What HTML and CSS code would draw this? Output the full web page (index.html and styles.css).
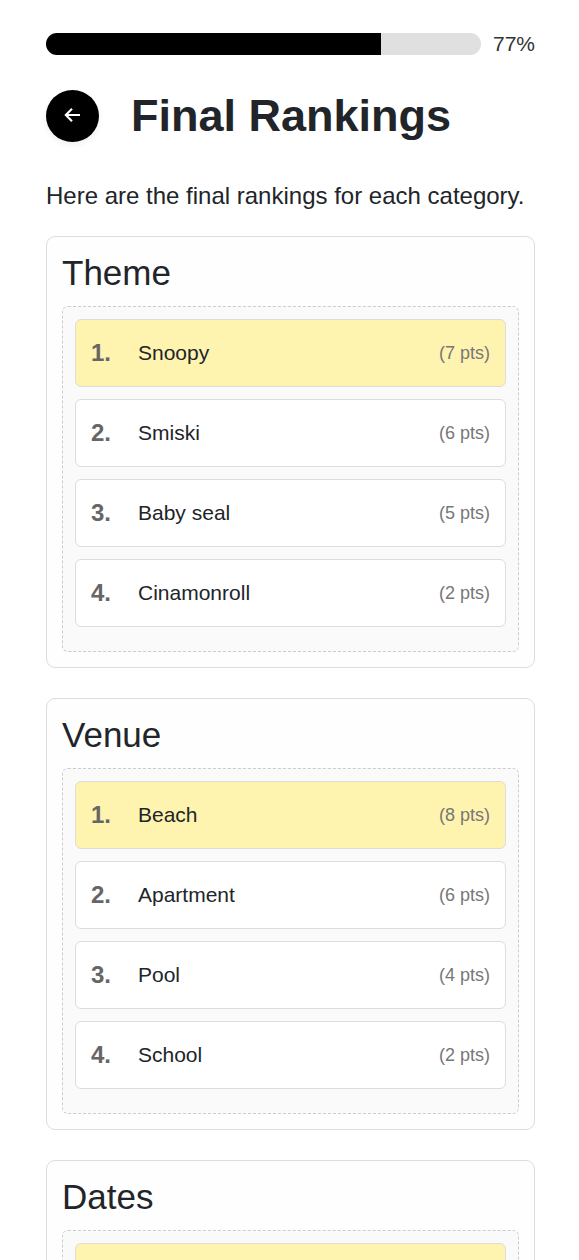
FILE: index.html
```html
<!DOCTYPE html>
<html lang="en">
<head>
<meta charset="utf-8">
<meta name="viewport" content="width=device-width, initial-scale=1">
<title>Final Rankings</title>
<link rel="stylesheet" href="styles.css">
</head>
<body>
<main class="page">
  <div class="progress">
    <div class="progress-track" role="progressbar" aria-label="Progress" aria-valuenow="77" aria-valuemin="0" aria-valuemax="100">
      <div class="progress-fill" style="width: 77%"></div>
    </div>
    <span class="progress-label">77%</span>
  </div>
  <header class="header">
    <button class="back" type="button" aria-label="Back">
      <svg width="19" height="18" viewBox="0 0 19 18" fill="none" stroke="currentColor" stroke-width="2.1" aria-hidden="true"><path d="M17 8H3M9 1.8L2.8 8L9 14.2"/></svg>
    </button>
    <h1 class="title">Final Rankings</h1>
  </header>
  <p class="intro">Here are the final rankings for each category.</p>

  <section class="card">
    <h2 class="card-title">Theme</h2>
    <ol class="ranking">
      <li class="item item-top"><span class="rank">1.</span><span class="name">Snoopy</span><span class="points">(7 pts)</span></li>
      <li class="item"><span class="rank">2.</span><span class="name">Smiski</span><span class="points">(6 pts)</span></li>
      <li class="item"><span class="rank">3.</span><span class="name">Baby seal</span><span class="points">(5 pts)</span></li>
      <li class="item"><span class="rank">4.</span><span class="name">Cinamonroll</span><span class="points">(2 pts)</span></li>
    </ol>
  </section>

  <section class="card">
    <h2 class="card-title">Venue</h2>
    <ol class="ranking">
      <li class="item item-top"><span class="rank">1.</span><span class="name">Beach</span><span class="points">(8 pts)</span></li>
      <li class="item"><span class="rank">2.</span><span class="name">Apartment</span><span class="points">(6 pts)</span></li>
      <li class="item"><span class="rank">3.</span><span class="name">Pool</span><span class="points">(4 pts)</span></li>
      <li class="item"><span class="rank">4.</span><span class="name">School</span><span class="points">(2 pts)</span></li>
    </ol>
  </section>

  <section class="card">
    <h2 class="card-title">Dates</h2>
    <ol class="ranking">
      <li class="item item-top"></li>
    </ol>
  </section>
</main>
</body>
</html>
```

FILE: styles.css
```css
* {
  box-sizing: border-box;
}

html {
  scrollbar-width: none;
}

body {
  margin: 0;
  background: #fff;
  color: #212529;
  font-family: "Liberation Sans", Arial, sans-serif;
  font-size: 24px;
  line-height: 36px;
}

.page {
  padding: 28px 44px 30px 46px;
}

.progress {
  display: flex;
  align-items: center;
  gap: 12px;
  height: 32px;
}

.progress-track {
  flex: 1;
  height: 22px;
  border-radius: 11px;
  background: #e0e0e0;
  overflow: hidden;
}

.progress-fill {
  height: 100%;
  background: #000;
}

.progress-label {
  color: #333;
  font-size: 21px;
  line-height: 32px;
}

.header {
  display: flex;
  align-items: center;
  gap: 32px;
  margin-top: 30px;
}

.back {
  display: flex;
  align-items: center;
  justify-content: center;
  width: 53px;
  height: 52px;
  padding: 0;
  border: 0;
  border-radius: 50%;
  background: #000;
  color: #fff;
  box-shadow: 0 3px 6px rgba(0, 0, 0, 0.06);
}

.title {
  margin: 0;
  font-size: 45px;
  line-height: 52px;
}

.intro {
  margin: 36px 0 22px;
}

.card {
  margin-bottom: 30px;
  padding: 15px;
  border: 1px solid #ddd;
  border-radius: 9px;
  background: #fefefe;
}

.card-title {
  margin: 0 0 12px;
  font-size: 35px;
  font-weight: 400;
  line-height: 42px;
}

.ranking {
  margin: 0;
  padding: 12px;
  border: 1px dashed #ccc;
  border-radius: 6px;
  background: #fafafa;
  list-style: none;
}

.item {
  display: flex;
  align-items: center;
  height: 68px;
  margin-bottom: 12px;
  padding: 0 15px;
  border: 1px solid #ddd;
  border-radius: 6px;
  background: #fff;
}

.item-top {
  background: #fff3b0;
}

.rank {
  width: 47px;
  color: #666;
  font-weight: 700;
}

.name {
  flex: 1;
  font-size: 21px;
}

.points {
  color: #777;
  font-size: 18px;
}
```
